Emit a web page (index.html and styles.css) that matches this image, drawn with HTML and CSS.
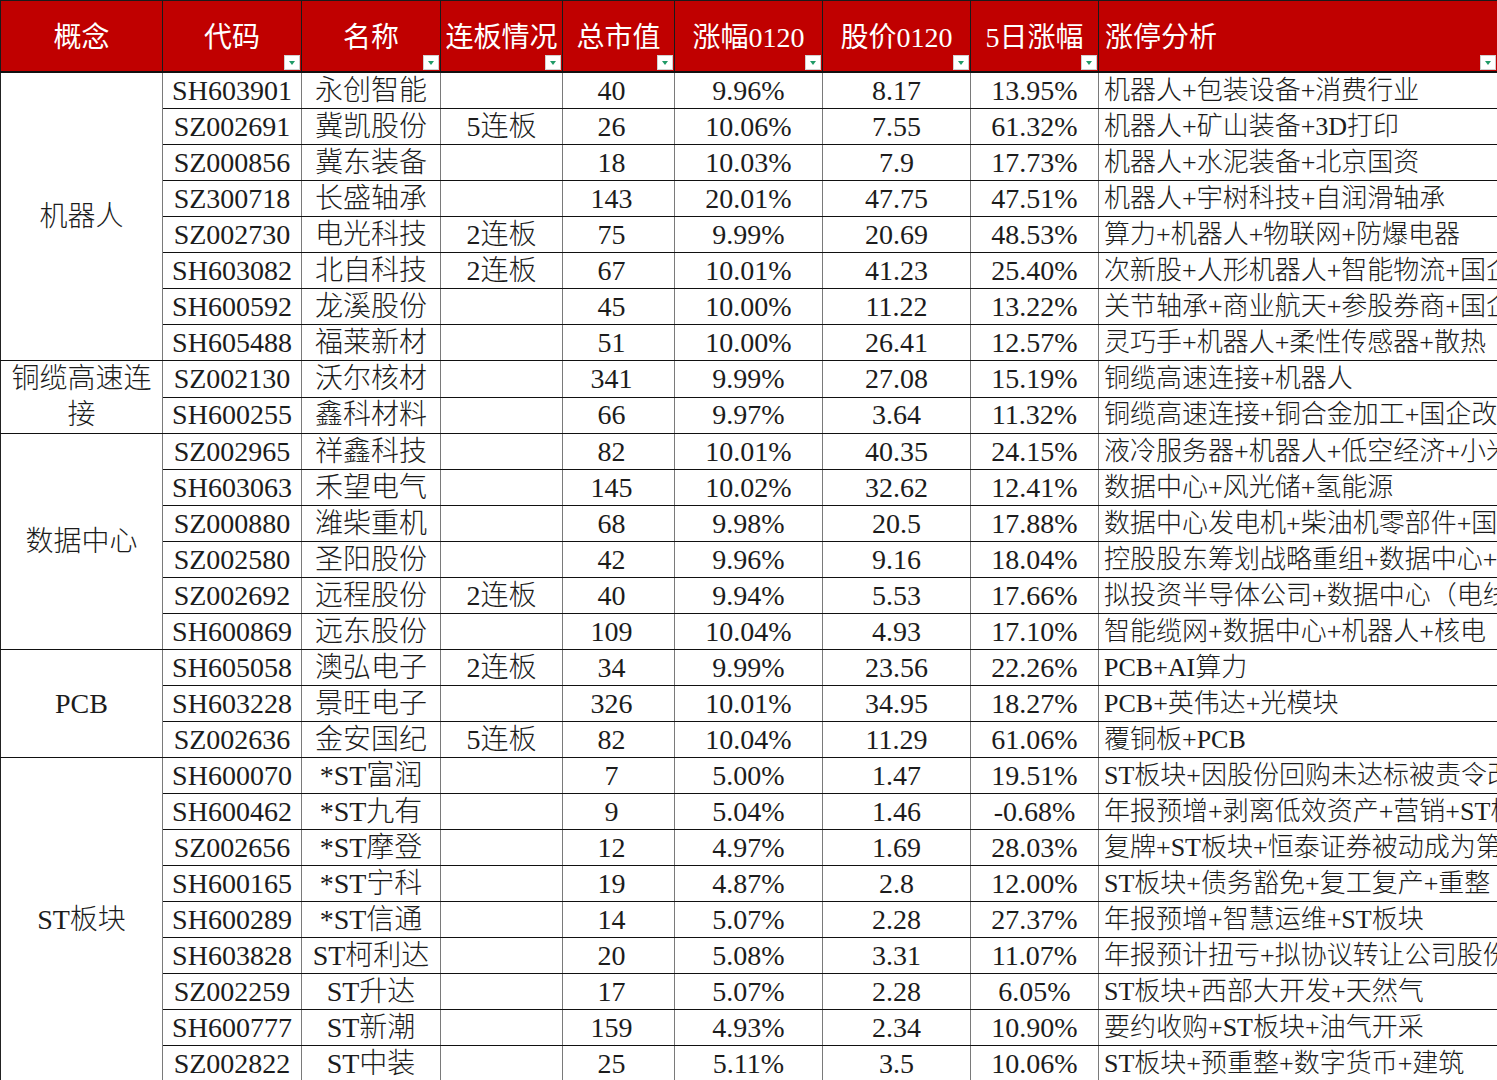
FILE: index.html
```html
<!DOCTYPE html>
<html lang="zh-CN">
<head>
<meta charset="utf-8">
<title>涨停分析</title>
<link rel="stylesheet" href="styles.css">
</head>
<body>
<table class="sheet">
  <colgroup>
    <col class="c-concept"><col class="c-code"><col class="c-name"><col class="c-streak"><col class="c-cap"><col class="c-chg"><col class="c-price"><col class="c-5d"><col class="c-note">
  </colgroup>
  <thead>
    <tr>
      <th>概念</th>
      <th>代码<span class="filter"></span></th>
      <th>名称<span class="filter"></span></th>
      <th>连板情况<span class="filter"></span></th>
      <th>总市值<span class="filter"></span></th>
      <th>涨幅0120<span class="filter"></span></th>
      <th>股价0120<span class="filter"></span></th>
      <th>5日涨幅<span class="filter"></span></th>
      <th class="left">涨停分析<span class="filter"></span></th>
    </tr>
  </thead>
  <tbody>
    <tr><td class="concept" rowspan="8">机器人</td><td>SH603901</td><td>永创智能</td><td></td><td class="cap">40</td><td>9.96%</td><td>8.17</td><td>13.95%</td><td class="note">机器人+包装设备+消费行业</td></tr>
    <tr><td>SZ002691</td><td>冀凯股份</td><td>5连板</td><td class="cap">26</td><td>10.06%</td><td>7.55</td><td>61.32%</td><td class="note">机器人+矿山装备+3D打印</td></tr>
    <tr><td>SZ000856</td><td>冀东装备</td><td></td><td class="cap">18</td><td>10.03%</td><td>7.9</td><td>17.73%</td><td class="note">机器人+水泥装备+北京国资</td></tr>
    <tr><td>SZ300718</td><td>长盛轴承</td><td></td><td class="cap">143</td><td>20.01%</td><td>47.75</td><td>47.51%</td><td class="note">机器人+宇树科技+自润滑轴承</td></tr>
    <tr><td>SZ002730</td><td>电光科技</td><td>2连板</td><td class="cap">75</td><td>9.99%</td><td>20.69</td><td>48.53%</td><td class="note">算力+机器人+物联网+防爆电器</td></tr>
    <tr><td>SH603082</td><td>北自科技</td><td>2连板</td><td class="cap">67</td><td>10.01%</td><td>41.23</td><td>25.40%</td><td class="note">次新股+人形机器人+智能物流+国企</td></tr>
    <tr><td>SH600592</td><td>龙溪股份</td><td></td><td class="cap">45</td><td>10.00%</td><td>11.22</td><td>13.22%</td><td class="note">关节轴承+商业航天+参股券商+国企</td></tr>
    <tr><td>SH605488</td><td>福莱新材</td><td></td><td class="cap">51</td><td>10.00%</td><td>26.41</td><td>12.57%</td><td class="note">灵巧手+机器人+柔性传感器+散热</td></tr>
    <tr><td class="concept" rowspan="2">铜缆高速连接</td><td>SZ002130</td><td>沃尔核材</td><td></td><td class="cap">341</td><td>9.99%</td><td>27.08</td><td>15.19%</td><td class="note">铜缆高速连接+机器人</td></tr>
    <tr><td>SH600255</td><td>鑫科材料</td><td></td><td class="cap">66</td><td>9.97%</td><td>3.64</td><td>11.32%</td><td class="note">铜缆高速连接+铜合金加工+国企改革</td></tr>
    <tr><td class="concept" rowspan="6">数据中心</td><td>SZ002965</td><td>祥鑫科技</td><td></td><td class="cap">82</td><td>10.01%</td><td>40.35</td><td>24.15%</td><td class="note">液冷服务器+机器人+低空经济+小米汽车</td></tr>
    <tr><td>SH603063</td><td>禾望电气</td><td></td><td class="cap">145</td><td>10.02%</td><td>32.62</td><td>12.41%</td><td class="note">数据中心+风光储+氢能源</td></tr>
    <tr><td>SZ000880</td><td>潍柴重机</td><td></td><td class="cap">68</td><td>9.98%</td><td>20.5</td><td>17.88%</td><td class="note">数据中心发电机+柴油机零部件+国企</td></tr>
    <tr><td>SZ002580</td><td>圣阳股份</td><td></td><td class="cap">42</td><td>9.96%</td><td>9.16</td><td>18.04%</td><td class="note">控股股东筹划战略重组+数据中心+储能</td></tr>
    <tr><td>SZ002692</td><td>远程股份</td><td>2连板</td><td class="cap">40</td><td>9.94%</td><td>5.53</td><td>17.66%</td><td class="note">拟投资半导体公司+数据中心（电线电缆）</td></tr>
    <tr><td>SH600869</td><td>远东股份</td><td></td><td class="cap">109</td><td>10.04%</td><td>4.93</td><td>17.10%</td><td class="note">智能缆网+数据中心+机器人+核电</td></tr>
    <tr><td class="concept" rowspan="3">PCB</td><td>SH605058</td><td>澳弘电子</td><td>2连板</td><td class="cap">34</td><td>9.99%</td><td>23.56</td><td>22.26%</td><td class="note">PCB+AI算力</td></tr>
    <tr><td>SH603228</td><td>景旺电子</td><td></td><td class="cap">326</td><td>10.01%</td><td>34.95</td><td>18.27%</td><td class="note">PCB+英伟达+光模块</td></tr>
    <tr><td>SZ002636</td><td>金安国纪</td><td>5连板</td><td class="cap">82</td><td>10.04%</td><td>11.29</td><td>61.06%</td><td class="note">覆铜板+PCB</td></tr>
    <tr><td class="concept" rowspan="9">ST板块</td><td>SH600070</td><td>*ST富润</td><td></td><td class="cap">7</td><td>5.00%</td><td>1.47</td><td>19.51%</td><td class="note">ST板块+因股份回购未达标被责令改正</td></tr>
    <tr><td>SH600462</td><td>*ST九有</td><td></td><td class="cap">9</td><td>5.04%</td><td>1.46</td><td>-0.68%</td><td class="note">年报预增+剥离低效资产+营销+ST板块</td></tr>
    <tr><td>SZ002656</td><td>*ST摩登</td><td></td><td class="cap">12</td><td>4.97%</td><td>1.69</td><td>28.03%</td><td class="note">复牌+ST板块+恒泰证券被动成为第一大股东</td></tr>
    <tr><td>SH600165</td><td>*ST宁科</td><td></td><td class="cap">19</td><td>4.87%</td><td>2.8</td><td>12.00%</td><td class="note">ST板块+债务豁免+复工复产+重整</td></tr>
    <tr><td>SH600289</td><td>*ST信通</td><td></td><td class="cap">14</td><td>5.07%</td><td>2.28</td><td>27.37%</td><td class="note">年报预增+智慧运维+ST板块</td></tr>
    <tr><td>SH603828</td><td>ST柯利达</td><td></td><td class="cap">20</td><td>5.08%</td><td>3.31</td><td>11.07%</td><td class="note">年报预计扭亏+拟协议转让公司股份</td></tr>
    <tr><td>SZ002259</td><td>ST升达</td><td></td><td class="cap">17</td><td>5.07%</td><td>2.28</td><td>6.05%</td><td class="note">ST板块+西部大开发+天然气</td></tr>
    <tr><td>SH600777</td><td>ST新潮</td><td></td><td class="cap">159</td><td>4.93%</td><td>2.34</td><td>10.90%</td><td class="note">要约收购+ST板块+油气开采</td></tr>
    <tr><td>SZ002822</td><td>ST中装</td><td></td><td class="cap">25</td><td>5.11%</td><td>3.5</td><td>10.06%</td><td class="note">ST板块+预重整+数字货币+建筑</td></tr>
  </tbody>
</table>
</body>
</html>
```
FILE: styles.css
```css
html, body {
  margin: 0;
  padding: 0;
  background: #ffffff;
  overflow: hidden;
}

.sheet {
  width: 1497px;
  table-layout: fixed;
  border-collapse: collapse;
  font-family: "Liberation Serif", "Noto Sans CJK SC", serif;
  font-size: 28px;
  font-weight: 300;
  color: #1c1c1c;
}

.c-concept { width: 162px; }
.c-code { width: 139px; }
.c-name { width: 139px; }
.c-streak { width: 122px; }
.c-cap { width: 112px; }
.c-chg { width: 148px; }
.c-price { width: 148px; }
.c-5d { width: 128px; }
.c-note { width: 399px; }

.sheet th {
  position: relative;
  height: 66px;
  padding: 4px 0 0;
  background: #c00000;
  color: #ffffff;
  font-weight: 400;
  font-size: 28px;
  line-height: 34px;
  text-align: center;
  white-space: nowrap;
  overflow: hidden;
  border: 1px solid #1a1a1a;
  border-bottom: 2px solid #111;
}

.sheet th.left {
  text-align: left;
  padding-left: 6px;
}

.filter {
  position: absolute;
  right: 1px;
  bottom: 1px;
  width: 16px;
  height: 15px;
  background: #ffffff;
  box-sizing: border-box;
  border: 1px solid #d0d0d0;
}

.filter::after {
  content: "";
  position: absolute;
  left: 4px;
  top: 5px;
  border-left: 3.5px solid transparent;
  border-right: 3.5px solid transparent;
  border-top: 4px solid #1f9a66;
}

.sheet td {
  height: 35px;
  padding: 0;
  line-height: 34px;
  text-align: center;
  white-space: nowrap;
  overflow: hidden;
  border-top: 1px solid #111;
  border-bottom: 1px solid #111;
  border-left: 1px solid #7a7a7a;
  border-right: 1px solid #7a7a7a;
}

.sheet td.cap {
  padding-right: 14px;
}

.sheet td.concept {
  white-space: normal;
  line-height: 36px;
  padding: 0 4px;
  border-left: 1px solid #222;
}

.sheet td.note {
  font-size: 26px;
  text-align: left;
  padding-left: 5px;
  text-overflow: clip;
}
```
